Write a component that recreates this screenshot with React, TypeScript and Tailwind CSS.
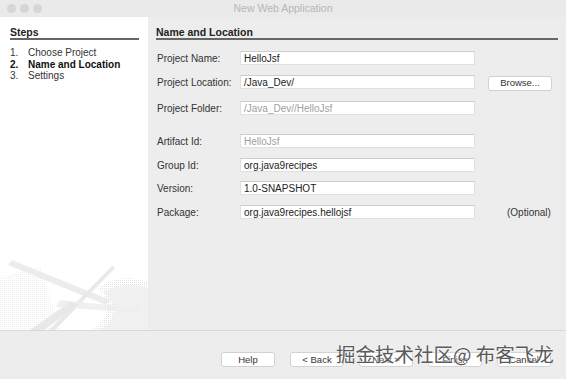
import React from "react";

const font = { fontFamily: '"Liberation Sans", Arial, sans-serif' };

type Row = {
  label: string;
  value: string;
  dim?: boolean;
  gap: string;
  extra?: "browse" | "optional";
};

const rows: Row[] = [
  { label: "Project Name:", value: "HelloJsf", gap: "mt-[11px]" },
  { label: "Project Location:", value: "/Java_Dev/", gap: "mt-[10px]", extra: "browse" },
  { label: "Project Folder:", value: "/Java_Dev//HelloJsf", dim: true, gap: "mt-[12px]" },
  { label: "Artifact Id:", value: "HelloJsf", dim: true, gap: "mt-[19px]" },
  { label: "Group Id:", value: "org.java9recipes", gap: "mt-[10px]" },
  { label: "Version:", value: "1.0-SNAPSHOT", gap: "mt-[9px]" },
  { label: "Package:", value: "org.java9recipes.hellojsf", gap: "mt-[10px]", extra: "optional" },
];

function Decoration() {
  return (
    <svg width="148" height="72" viewBox="0 0 148 72" className="block">
      <defs>
        <pattern id="dots" width="2" height="2" patternUnits="userSpaceOnUse">
          <rect width="1" height="1" fill="#e2e2e2" />
        </pattern>
      </defs>
      <path d="M0 20 L40 8 L60 72 L0 72 Z" fill="url(#dots)" opacity="0.6" />
      <path d="M12 2 L110 42 L106 47 L8 7 Z" fill="#ececec" />
      <path d="M112 8 L115 10 L55 72 L49 72 Z" fill="#e9e9e9" />
      <path d="M60 42 L140 50 L140 55 L56 49 Z" fill="#f0f0f0" />
      <path d="M98 30 Q120 14 148 24 L148 72 L92 72 Q120 52 98 30 Z" fill="url(#dots)" />
      <path d="M104 34 Q124 22 148 30 L148 72 L100 72 Q126 56 104 34 Z" fill="#efefef" opacity="0.8" />
      <path d="M30 72 L70 44 L79 46 L44 72 Z" fill="#e8e8e8" />
    </svg>
  );
}

function Btn({ children, w = "w-[54px]" }: { children: React.ReactNode; w?: string }) {
  return (
    <div
      className={`${w} h-[15px] bg-white border border-[#d2d2d2] rounded-[3px] flex items-center justify-center text-[9.5px] leading-none text-[#333]`}
    >
      {children}
    </div>
  );
}

export default function App() {
  return (
    <div className="w-[566px] h-[379px] bg-[#ededed] flex flex-col overflow-hidden relative" style={font}>
      {/* title bar */}
      <div className="h-[17px] bg-[#eaeaea] flex items-center relative shrink-0">
        <div className="flex gap-[4px] pl-[7px]">
          <span className="w-[9px] h-[9px] rounded-full bg-[#d6d6d6]" />
          <span className="w-[9px] h-[9px] rounded-full bg-[#d6d6d6]" />
          <span className="w-[9px] h-[9px] rounded-full bg-[#d6d6d6]" />
        </div>
        <div className="absolute inset-0 flex items-center justify-center text-[10.5px] text-[#b6b6b6]">
          New Web Application
        </div>
      </div>

      <div className="flex h-[313px] shrink-0">
        {/* steps panel */}
        <div className="w-[148px] bg-white flex flex-col justify-between">
          <div className="pt-[9px] pl-[10px] pr-[9px]">
            <div className="text-[10.5px] font-bold leading-[12px] text-[#222] border-b-2 border-[#666]">
              Steps
            </div>
            <ol className="mt-[7px] text-[10px] leading-[11.5px]">
              <li className="flex text-[#333]">
                <span className="w-[18px]">1.</span>Choose Project
              </li>
              <li className="flex font-bold text-[#111]">
                <span className="w-[18px]">2.</span>Name and Location
              </li>
              <li className="flex text-[#333]">
                <span className="w-[18px]">3.</span>Settings
              </li>
            </ol>
          </div>
          <Decoration />
        </div>

        {/* form panel */}
        <div className="flex-1 pt-[9px] pl-[8px] pr-[8px]">
          <div className="text-[10.5px] font-bold leading-[12px] text-[#222] border-b-2 border-[#666]">
            Name and Location
          </div>
          {rows.map((r) => (
            <div key={r.label} className={`${r.gap} flex items-center h-[14px]`}>
              <div className="w-[84px] pl-[1px] text-[10px] text-[#333]">{r.label}</div>
              <div
                className={`w-[235px] h-[14px] bg-white border border-[#e0e0e0] border-t-[#cdcdcd] flex items-center pl-[3px] text-[10px] ${
                  r.dim ? "text-[#a0a0a0]" : "text-[#222]"
                }`}
              >
                {r.value}
              </div>
              {r.extra === "browse" && (
                <div className="ml-[13px] mt-[2px]">
                  <Btn w="w-[64px]">Browse...</Btn>
                </div>
              )}
              {r.extra === "optional" && (
                <div className="ml-[32px] text-[10px] text-[#333]">(Optional)</div>
              )}
            </div>
          ))}
        </div>
      </div>

      {/* button bar */}
      <div className="border-t border-[#d8d8d8] flex-1 pt-[21px] pl-[221px] flex gap-[15px]">
        <Btn>Help</Btn>
        <Btn>&lt; Back</Btn>
        <Btn>Next &gt;</Btn>
        <Btn>Finish</Btn>
        <Btn>Cancel</Btn>
      </div>

      {/* watermark */}
      <div
        className="absolute left-[336px] top-[344px] text-[19.5px] leading-[19px] text-[#5a5a5a] whitespace-nowrap [text-shadow:0_0_2px_#fff,0_0_1px_#fff]"
        style={{ fontFamily: '"Noto Sans CJK SC", sans-serif' }}
      >
        掘金技术社区@ 布客飞龙
      </div>
    </div>
  );
}
